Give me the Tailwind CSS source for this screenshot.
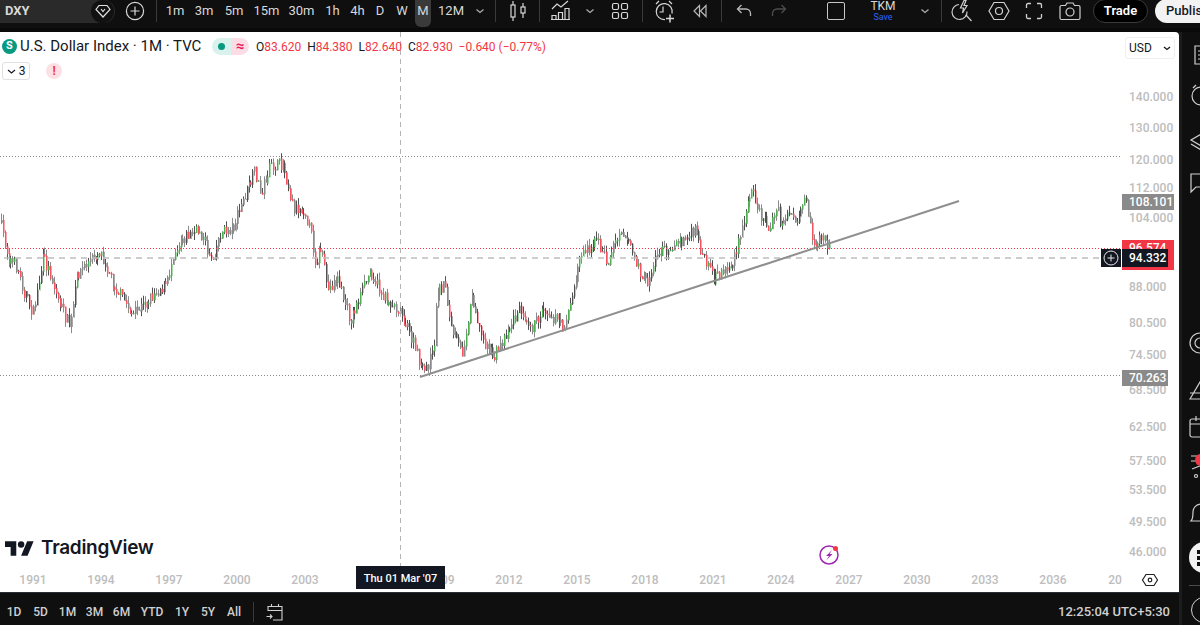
<!DOCTYPE html>
<html lang="en">
<head>
    <meta charset="UTF-8">
    <title>DXY chart</title>
    <script src="https://cdn.jsdelivr.net/npm/@tailwindcss/browser@4"></script>
</head>
<body class="w-[1200px] h-[625px] overflow-hidden bg-[#0f0f0f] font-['Roboto',sans-serif] text-[#d8d8d8]">

    <!-- top toolbar -->
    <header class="h-[32px] bg-[#0a0a0a] overflow-hidden">
        <div class="h-[28px] pb-[6px] bg-[#0f0f0f] flex items-center text-[13px]">
            <div class="w-[115px] h-[23px] shrink-0 bg-[#2a2a2a] rounded-r-[12px] flex items-center justify-between pl-[5px] pr-[1px] text-[13px] font-bold">
                <span>DXY</span>
                <span class="w-[23px] h-[23px] rounded-full bg-[#111111] flex items-center justify-center">
                    <svg class="w-[16px] h-[16px]" viewBox="0 0 16 16" fill="none" stroke="#e0e0e0" stroke-width="1.2"><path d="M4 2.5h8L15 6.5 8 14 1 6.5z"/><path d="M6 6l2 2.5L10 6"/></svg>
                </span>
            </div>
            <button class="w-[22px] h-[22px] ml-[9px] shrink-0 flex items-center justify-center">
                <svg class="w-[20px] h-[20px]" viewBox="0 0 20 20" fill="none" stroke="#d8d8d8" stroke-width="1.2"><circle cx="10" cy="10" r="8.6"/><path d="M10 5.5v9M5.5 10h9"/></svg>
            </button>
            <span class="w-px h-[22px] ml-[10px] bg-[#3a3a3a] shrink-0"></span>
            <div class="flex h-[22px] ml-[4px] shrink-0 items-center text-center">
                <span class="w-[28px]">1m</span>
                <span class="w-[30px]">3m</span>
                <span class="w-[30px]">5m</span>
                <span class="w-[35px]">15m</span>
                <span class="w-[35px]">30m</span>
                <span class="w-[27px]">1h</span>
                <span class="w-[23px]">4h</span>
                <span class="w-[22px]">D</span>
                <span class="w-[22px]">W</span>
                <span class="w-[16px] h-[27px] ml-[2px] self-start leading-[22px] bg-[#3a3a3a] rounded-b-[6px]">M</span>
                <span class="w-[40px]">12M</span>
            </div>
            <svg class="w-[18px] h-[18px] shrink-0" viewBox="0 0 18 18" fill="none" stroke="#b0b0b0" stroke-width="1.2"><path d="M5.5 7.500L9 10.500l3.500-3"/></svg>
            <span class="w-px h-[22px] ml-[6px] bg-[#3a3a3a] shrink-0"></span>
            <div class="w-[43px] shrink-0 flex justify-center">
                <svg class="w-[20px] h-[24px]" viewBox="0 0 20 24" fill="none" stroke="#d8d8d8" stroke-width="1.2"><rect x="3" y="6" width="4" height="12"/><path d="M5 2v4M5 18v4"/><rect x="13" y="8" width="4" height="6"/><path d="M15 4v4M15 14v5"/></svg>
            </div>
            <span class="w-px h-[22px] bg-[#3a3a3a] shrink-0"></span>
            <div class="w-[42px] shrink-0 flex justify-center">
                <svg class="w-[24px] h-[24px]" viewBox="0 0 24 24" fill="none" stroke="#d8d8d8" stroke-width="1.2"><path d="M3 10l5-5 4 3 7-6"/><path d="M3 20.500v-4h4v4zM9.500 20.500v-7h4v7zM16 20.500V9.500h4v11zM2 20.500h19"/></svg>
            </div>
            <svg class="w-[16px] h-[18px] shrink-0" viewBox="0 0 16 18" fill="none" stroke="#b0b0b0" stroke-width="1.2"><path d="M4.500 7.500L8 10.500l3.500-3"/></svg>
            <div class="w-[44px] shrink-0 flex justify-center">
                <svg class="w-[20px] h-[20px]" viewBox="0 0 20 20" fill="none" stroke="#d8d8d8" stroke-width="1.2"><rect x="2.500" y="2.500" width="6" height="6" rx="1.500"/><rect x="11.500" y="2.500" width="6" height="6" rx="1.500"/><rect x="2.500" y="11.500" width="6" height="6" rx="1.500"/><rect x="11.500" y="11.500" width="6" height="6" rx="1.500"/></svg>
            </div>
            <span class="w-px h-[22px] bg-[#3a3a3a] shrink-0"></span>
            <div class="w-[42px] shrink-0 flex justify-center">
                <svg class="w-[24px] h-[24px]" viewBox="0 0 24 24" fill="none" stroke="#d8d8d8" stroke-width="1.2"><path d="M13 20.500a8 8 0 1 1 7-6"/><path d="M11 7.500v5.500H7.500"/><path d="M4 5l3-3M17 2l3 3"/><path d="M18 15.500v8M14 19.500h8" stroke-width="1.500"/></svg>
            </div>
            <div class="w-[30px] shrink-0 flex justify-center">
                <svg class="w-[18px] h-[18px]" viewBox="0 0 18 18" fill="none" stroke="#b8b8b8" stroke-width="1.2"><path d="M8.500 3.500L3 9l5.500 5.500zM15 3.500L9.500 9l5.500 5.500z"/></svg>
            </div>
            <span class="w-px h-[22px] ml-[6px] bg-[#3a3a3a] shrink-0"></span>
            <div class="w-[44px] shrink-0 flex justify-center">
                <svg class="w-[18px] h-[18px]" viewBox="0 0 18 18" fill="none" stroke="#b8b8b8" stroke-width="1.3"><path d="M6.500 3L2.500 7l4 4"/><path d="M2.500 7H11a4.500 4.500 0 0 1 4.500 4.500V14"/></svg>
            </div>
            <div class="w-[26px] shrink-0 flex justify-center">
                <svg class="w-[18px] h-[18px]" viewBox="0 0 18 18" fill="none" stroke="#4d4d4d" stroke-width="1.3"><path d="M11.500 3l4 4-4 4"/><path d="M15.500 7H7a4.500 4.500 0 0 0-4.500 4.500V14"/></svg>
            </div>
            <div class="w-[44px] ml-[22px] shrink-0 flex justify-center">
                <span class="block w-[18px] h-[18px] border border-[#c8c8c8] rounded-[2px]"></span>
            </div>
            <div class="w-[50px] shrink-0 flex flex-col items-center leading-none">
                <span class="text-[12px] text-[#d8d8d8]">TKM</span>
                <span class="text-[9px] mt-[1px] text-[#2962ff]">Save</span>
            </div>
            <svg class="w-[30px] h-[18px] ml-[2px] shrink-0" viewBox="0 0 30 18" fill="none" stroke="#b0b0b0" stroke-width="1.2"><path d="M11.500 7.500L15 10.500l3.500-3"/></svg>
            <span class="w-px h-[22px] ml-px bg-[#3a3a3a] shrink-0"></span>
            <div class="w-[40px] shrink-0 flex justify-center">
                <svg class="w-[22px] h-[24px]" viewBox="0 0 22 24" fill="none" stroke="#d0d0d0" stroke-width="1.2"><path d="M8 5.500a7.500 7.500 0 1 0 8 7"/><path d="M15 16l5.500 6"/><path d="M13 1.500L9.500 9h3l-1 5 4.500-7.500h-3l2-5z"/></svg>
            </div>
            <div class="w-[34px] shrink-0 flex justify-center">
                <svg class="w-[22px] h-[22px]" viewBox="0 0 22 22" fill="none" stroke="#d0d0d0" stroke-width="1.2"><path d="M6 2.500h10l5 8.500-5 8.500H6L1 11z"/><circle cx="11" cy="11" r="3.500"/></svg>
            </div>
            <div class="w-[36px] shrink-0 flex justify-center">
                <svg class="w-[18px] h-[18px]" viewBox="0 0 18 18" fill="none" stroke="#d0d0d0" stroke-width="1.3"><path d="M1.500 6V3a1.500 1.500 0 0 1 1.500-1.500h3M12 1.500h3A1.500 1.500 0 0 1 16.500 3v3M16.500 12v3a1.500 1.500 0 0 1-1.500 1.500h-3M6 16.500H3A1.500 1.500 0 0 1 1.500 15v-3"/></svg>
            </div>
            <div class="w-[36px] shrink-0 flex justify-center">
                <svg class="w-[22px] h-[20px]" viewBox="0 0 22 20" fill="none" stroke="#d0d0d0" stroke-width="1.2"><path d="M2.500 4.500h4L8 2h6l1.500 2.500h4a1.500 1.500 0 0 1 1.500 1.500v11a1.500 1.500 0 0 1-1.500 1.500h-17A1.500 1.500 0 0 1 1 17V6a1.500 1.500 0 0 1 1.500-1.500z"/><circle cx="11" cy="11" r="4"/></svg>
            </div>
            <button class="w-[55px] h-[24px] ml-[5px] shrink-0 rounded-full bg-black border border-[#3a3a3a] text-white text-[13px] font-semibold">Trade</button>
            <button class="w-[60px] h-[24px] ml-[7px] shrink-0 rounded-l-full bg-[#f2f2f2] text-[#131722] text-[13px] font-medium text-left pl-[11px]">Publish</button>
        </div>
    </header>

    <div class="flex h-[593px]">
        <!-- chart column -->
        <div class="w-[1179px] shrink-0 flex flex-col">
            <main class="relative h-[561px] bg-white rounded-tr-[4px] overflow-hidden border-b border-[#2a2e39]">
                <!-- svg uses page coordinates so it is easy to line up with the screenshot -->
                <svg class="absolute inset-0" width="1179" height="561" viewBox="0 32 1179 561">
                    <line x1="0" y1="156.500" x2="1120" y2="156.500" stroke="#8a8a8a" stroke-dasharray="1 2"/>
                    <line x1="0" y1="375.500" x2="1120" y2="375.500" stroke="#8a8a8a" stroke-dasharray="1 2"/>
                    <g id="bars"></g>
                    <line x1="0" y1="248.500" x2="1122" y2="248.500" stroke="#f23645" stroke-dasharray="1 2"/>
                    <line x1="4" y1="258" x2="1101" y2="258" stroke="#bdbdbd" stroke-width="1.500" stroke-dasharray="6 5"/>
                    <line x1="400.500" y1="32" x2="400.500" y2="566" stroke="#b5b5b5" stroke-dasharray="5 4"/>
                    <line x1="420" y1="377" x2="959" y2="201" stroke="#8f8f8f" stroke-width="2"/>

                    <g class="fill-[#bdbdbd] text-[12px] font-medium">
                        <text x="1129" y="101">140.000</text>
                        <text x="1129" y="132">130.000</text>
                        <text x="1129" y="164">120.000</text>
                        <text x="1129" y="192">112.000</text>
                        <text x="1129" y="222">104.000</text>
                        <text x="1129" y="291">88.000</text>
                        <text x="1129" y="327">80.500</text>
                        <text x="1129" y="359">74.500</text>
                        <text x="1129" y="394">68.500</text>
                        <text x="1129" y="431">62.500</text>
                        <text x="1129" y="465">57.500</text>
                        <text x="1129" y="494">53.500</text>
                        <text x="1129" y="526">49.500</text>
                        <text x="1129" y="556">46.000</text>
                    </g>
                    <g class="fill-[#bdbdbd] text-[12px] font-medium" text-anchor="middle">
                        <text x="33" y="584">1991</text>
                        <text x="101" y="584">1994</text>
                        <text x="169" y="584">1997</text>
                        <text x="237" y="584">2000</text>
                        <text x="305" y="584">2003</text>
                        <text x="441" y="584">2009</text>
                        <text x="509" y="584">2012</text>
                        <text x="577" y="584">2015</text>
                        <text x="645" y="584">2018</text>
                        <text x="713" y="584">2021</text>
                        <text x="781" y="584">2024</text>
                        <text x="849" y="584">2027</text>
                        <text x="917" y="584">2030</text>
                        <text x="985" y="584">2033</text>
                        <text x="1053" y="584">2036</text>
                        <text x="1115" y="584">20</text>
                    </g>
                    <!-- lightning badge -->
                    <circle cx="829" cy="555" r="9" fill="none" stroke="#9c27b0" stroke-width="1.500"/>
                    <path d="M832 550l-6 6h3l-2.500 4 6-6h-3z" fill="#9c27b0"/>
                    <circle cx="835.500" cy="548.500" r="2.500" fill="#f23645"/>
                    <!-- axis settings -->
                    <path d="M1146 574.500h8l3.500 5.500-3.500 5.500h-8l-3.500-5.500z" fill="none" stroke="#222222" stroke-width="1.200"/>
                    <circle cx="1150" cy="580" r="1.800" fill="none" stroke="#222222" stroke-width="1.200"/>
                </svg>

                <!-- legend -->
                <div class="relative flex items-center h-[17px] mt-[6px] pl-[2px] text-[15px] text-[#131722]">
                    <span class="w-[15px] h-[15px] rounded-full bg-[#089981] text-white text-[11px] font-bold flex items-center justify-center">S</span>
                    <span class="ml-[3px] w-[192px] shrink-0 whitespace-nowrap">U.S. Dollar Index · 1M · TVC</span>
                    <span class="flex h-[17px] w-[37px] shrink-0 rounded-full overflow-hidden">
                        <span class="w-[19px] bg-[#d9f2ee] flex items-center justify-center"><span class="w-[7px] h-[7px] rounded-full bg-[#089981]"></span></span>
                        <span class="w-[18px] bg-[#fcdde6] text-[#e91e63] text-[15px] font-bold flex items-center justify-center">≈</span>
                    </span>
                    <span class="ml-[7px] whitespace-nowrap text-[12px] text-[#f23645]">
                        <span class="text-[#131722]">O</span>83.620 <span class="ml-[3px] text-[#131722]">H</span>84.380 <span class="ml-[3px] text-[#131722]">L</span>82.640 <span class="ml-[3px] text-[#131722]">C</span>82.930 <span class="ml-[3px]">−0.640 (−0.77%)</span>
                    </span>
                </div>
                <div class="relative flex items-center h-[18px] mt-[7px] pl-[2px]">
                    <span class="w-[28px] h-[18px] border border-[#e0e0e0] rounded-[3px] flex items-center justify-center gap-[3px] text-[12px] text-[#131722]">
                        <svg class="w-[9px] h-[9px]" viewBox="0 0 9 9" fill="none" stroke="#131722" stroke-width="1.200"><path d="M1 3l3.500 3L8 3"/></svg>3
                    </span>
                    <span class="w-[16px] h-[16px] ml-[16px] rounded-full bg-[#fde0e3] text-[#f23645] text-[12px] font-bold flex items-center justify-center">!</span>
                </div>

                <!-- currency select -->
                <div class="absolute left-[1125px] top-[5px] w-[50px] h-[22px] bg-white border border-[#f0f0f0] rounded-[3px] flex items-center justify-between pl-[3px] pr-[3px] text-[12px] text-[#131722]">
                    <span>USD</span>
                    <svg class="w-[8px] h-[8px]" viewBox="0 0 8 8" fill="none" stroke="#131722" stroke-width="1.300"><path d="M1 3l3 2.500L7 3"/></svg>
                </div>

                <!-- price labels -->
                <span class="absolute left-[1122px] top-[162px] w-[52px] h-[16px] bg-[#8a8a8a] text-white text-[12px] font-medium leading-[16px] pl-[7px]">108.101</span>
                <span class="absolute left-[1122px] top-[208px] w-[52px] h-[30px] bg-[#f23645] text-white text-[12px] font-medium leading-[16px] pl-[7px]">96.574</span>
                <span class="absolute left-[1101px] top-[217px] w-[20px] h-[18px] bg-[#131722] flex items-center justify-center">
                    <svg class="w-[16px] h-[16px]" viewBox="0 0 16 16" fill="none" stroke="#e8e8e8" stroke-width="1"><circle cx="8" cy="8" r="7"/><path d="M8 4.500v7M4.500 8h7"/></svg>
                </span>
                <span class="absolute left-[1122px] top-[217px] w-[46px] h-[18px] bg-[#131722] text-white text-[12px] font-medium leading-[18px] pl-[7px]">94.332</span>
                <span class="absolute left-[1122px] top-[338px] w-[46px] h-[16px] bg-[#8a8a8a] text-white text-[12px] font-medium leading-[16px] pl-[7px]">70.263</span>

                <!-- date under the crosshair -->
                <span class="absolute left-[356px] top-[534px] w-[89px] h-[23px] bg-[#131722] text-white text-[11px] font-medium leading-[25px] text-center whitespace-nowrap">Thu 01 Mar '07</span>

                <!-- logo -->
                <div class="absolute left-[5px] top-[505px] flex items-center gap-[7px] text-[#131722]">
                    <svg class="w-[29px] h-[15px]" viewBox="0 4 36 18" fill="#131722"><path d="M14 22H7V11H0V4h14v18zM28 22h-8l7.500-18h8L28 22z"/><circle cx="20" cy="8" r="4"/></svg>
                    <span class="text-[19px] font-semibold font-['Inter',sans-serif] leading-[22px] tracking-[-0.3px]">TradingView</span>
                </div>
            </main>

            <!-- range bar -->
            <footer class="h-[32px] pt-[5px] bg-[#0f0f0f] flex items-center text-[12px] font-medium text-[#d0d0d0]">
                <div class="flex items-center text-center pl-[1px]">
                    <span class="w-[26px]">1D</span>
                    <span class="w-[27px]">5D</span>
                    <span class="w-[27px]">1M</span>
                    <span class="w-[27px]">3M</span>
                    <span class="w-[27px]">6M</span>
                    <span class="w-[34px]">YTD</span>
                    <span class="w-[26px]">1Y</span>
                    <span class="w-[26px]">5Y</span>
                    <span class="w-[26px]">All</span>
                </div>
                <span class="w-px h-[20px] ml-[6px] bg-[#3a3a3a]"></span>
                <svg class="w-[20px] h-[20px] ml-[11px]" viewBox="0 0 20 20" fill="none" stroke="#d0d0d0" stroke-width="1.100"><path d="M3 9V4.500h14V18H8"/><path d="M3 8.500h14M6.500 2v3M13.500 2v3"/><path d="M1.500 14.500H7M5 12.500l2 2-2 2"/></svg>
                <span class="ml-auto mr-[9px] text-[13px]">12:25:04 UTC+5:30</span>
            </footer>
        </div>

        <span class="w-[3px] h-[593px] bg-[#1c1c1c] shrink-0"></span>

        <!-- right sidebar, cut off by the window edge -->
        <aside class="w-[18px] h-[593px] shrink-0 overflow-hidden flex flex-col pl-[9px]">
            <svg class="w-[24px] h-[22px] mt-[12px] shrink-0" viewBox="0 0 24 22" fill="none" stroke="#cfcfcf" stroke-width="1.200"><path d="M4 2h16v18H4zM7 7h3M7 11h3M7 15h3"/></svg>
            <svg class="w-[24px] h-[24px] mt-[17px] -ml-[2px] shrink-0" viewBox="0 0 24 24" fill="none" stroke="#cfcfcf" stroke-width="1.200"><circle cx="12" cy="13" r="9"/><path d="M4 5l3-3"/></svg>
            <svg class="w-[24px] h-[20px] mt-[24px] -ml-[2px] shrink-0" viewBox="0 0 24 20" fill="none" stroke="#cfcfcf" stroke-width="1.200"><path d="M14 2L2 9l12 7M2 13l12 7"/></svg>
            <svg class="w-[24px] h-[22px] mt-[21px] -ml-[2px] shrink-0" viewBox="0 0 24 22" fill="none" stroke="#cfcfcf" stroke-width="1.200"><path d="M2 20V2h20v13H7z"/></svg>
            <svg class="w-[24px] h-[24px] mt-[137px] -ml-[3px] shrink-0" viewBox="0 0 24 24" fill="none" stroke="#cfcfcf" stroke-width="1.200"><circle cx="12" cy="12" r="10"/><circle cx="12" cy="12" r="5"/></svg>
            <svg class="w-[24px] h-[22px] mt-[24px] -ml-[3px] shrink-0" viewBox="0 0 24 22" fill="none" stroke="#cfcfcf" stroke-width="1.200"><path d="M2 20L12 3l10 17zM2 14h14"/></svg>
            <svg class="w-[24px] h-[24px] mt-[14px] -ml-[2px] shrink-0" viewBox="0 0 24 24" fill="none" stroke="#cfcfcf" stroke-width="1.200"><rect x="1" y="4" width="20" height="18" rx="2"/><path d="M7 1v5M1 9h20"/></svg>
            <div class="relative w-[24px] h-[32px] mt-[9px] -ml-[4px] shrink-0">
                <svg class="w-[24px] h-[32px]" viewBox="0 0 24 32" fill="none" stroke="#cfcfcf" stroke-width="1.200"><path d="M4 8h8M4 13h8M5 21l10-4"/><circle cx="9" cy="28" r="1.500"/></svg>
                <span class="absolute left-[8px] top-[6px] w-[12px] h-[12px] rounded-full bg-[#f23645]"></span>
            </div>
            <svg class="w-[24px] h-[24px] mt-[21px] -ml-[2px] shrink-0" viewBox="0 0 24 24" fill="none" stroke="#cfcfcf" stroke-width="1.200"><path d="M2 20c2-2 2-5 2-9a8 8 0 0 1 16 0c0 4 0 7 2 9z"/></svg>
            <div class="w-[31px] h-[31px] mt-[17px] -ml-[2px] shrink-0 rounded-full bg-[#f2f2f2] grid grid-cols-2 gap-[2px] content-center pl-[8px]">
                <span class="w-[4px] h-[4px] bg-[#111111]"></span><span class="w-[4px] h-[4px] bg-[#111111]"></span>
                <span class="w-[4px] h-[4px] bg-[#111111]"></span><span class="w-[4px] h-[4px] bg-[#111111]"></span>
                <span class="w-[4px] h-[4px] bg-[#111111]"></span><span class="w-[4px] h-[4px] bg-[#111111]"></span>
            </div>
            <span class="w-[16px] h-px mt-[12px] -ml-[2px] bg-[#4a4a4a] shrink-0"></span>
            <span class="w-[26px] h-[26px] mt-[11px] shrink-0 rounded-full border border-[#cfcfcf]"></span>
        </aside>
    </div>

    <script>
        // rough shape of the price line, picked off the screenshot as [x, y]
        const path = [[0,222],[2,230],[8,257],[17,267],[23,290],[33,313],[43,257],[50,273],[57,297],[70,327],[77,273],[100,250],[113,283],[133,315],[157,290],[167,283],[173,253],[182,237],[200,230],[208,253],[213,257],[220,233],[233,227],[243,200],[255,170],[260,193],[270,167],[283,163],[293,207],[305,210],[312,240],[315,263],[320,247],[328,290],[337,277],[350,320],[370,270],[383,297],[400,310],[413,343],[423,373],[433,353],[437,290],[445,283],[450,327],[462,353],[472,293],[480,333],[493,358],[507,330],[520,308],[533,327],[543,307],[563,327],[573,293],[580,253],[597,240],[607,263],[620,227],[630,243],[637,267],[647,283],[657,253],[683,240],[695,230],[705,263],[713,278],[733,263],[743,225],[752,180],[757,210],[770,227],[777,207],[780,227],[788,210],[797,227],[805,197],[812,240],[815,245],[822,235],[828,247]];

        // small seeded random so every render draws the same bars
        let seed = 7;
        function rnd() {
            seed = (seed * 16807) % 2147483647;
            return seed / 2147483647;
        }

        function priceAt(x) {
            for (let i = 1; i < path.length; i++) {
                if (x <= path[i][0]) {
                    const a = path[i - 1], b = path[i];
                    return a[1] + (b[1] - a[1]) * (x - a[0]) / (b[0] - a[0]);
                }
            }
            return path[path.length - 1][1];
        }

        let out = '';
        let prev = priceAt(0);
        for (let x = 1; x < 830; x += 1.89) {
            const px = Math.round(x);
            const close = priceAt(x) + (rnd() - 0.5) * 12;
            const top = Math.min(prev, close), bottom = Math.max(prev, close);
            const hi = top - rnd() * 7, lo = bottom + rnd() * 7;
            const falling = close > prev;
            const solid = falling ? '#f7525f' : '#4caf50';
            const soft = rnd() < 0.5 ? '#a8a8a8' : (falling ? '#f9a3aa' : '#a5d9a8');
            const wick = rnd() < 0.5 ? '#505050' : '#8a8a8a';
            out += `<rect x="${px + 1}" y="${top.toFixed(1)}" width="1" height="${(bottom - top + 1).toFixed(1)}" fill="${soft}"/>`;
            out += `<rect x="${px}" y="${hi.toFixed(1)}" width="1" height="${(lo - hi).toFixed(1)}" fill="${wick}"/>`;
            // only about half the bars show a strong colour, the rest stay pale as in the screenshot
            if (rnd() < 0.55) {
                out += `<rect x="${px}" y="${top.toFixed(1)}" width="1" height="${(bottom - top + 1).toFixed(1)}" fill="${solid}"/>`;
            }
            prev = close;
        }
        document.getElementById('bars').innerHTML = out;
    </script>
</body>
</html>
